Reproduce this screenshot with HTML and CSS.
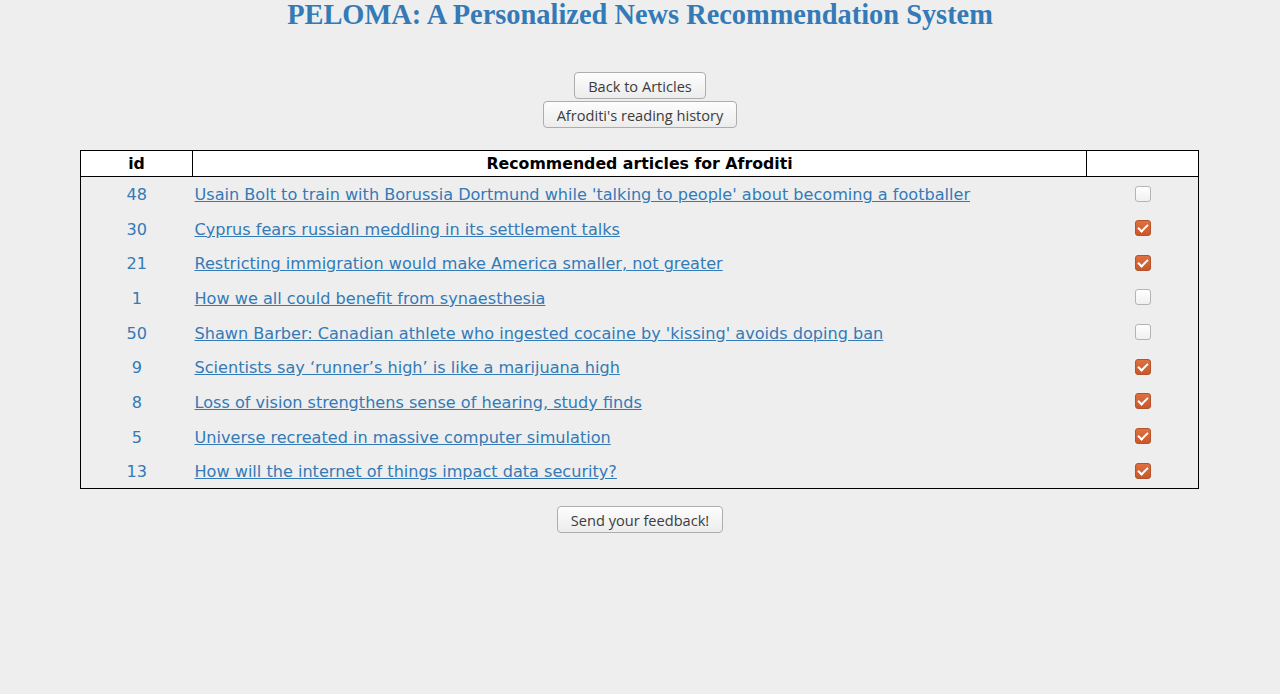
FILE: index.html
```html
<!DOCTYPE html>
<html>
<head>
<meta charset="utf-8">
<link rel="stylesheet" href="styles.css">
</head>
<body>
<h1 class="title">PELOMA: A Personalized News Recommendation System</h1>
<div class="actions">
  <button class="btn">Back to Articles</button>
  <button class="btn">Afroditi's reading history</button>
</div>
<table class="recs">
  <thead>
    <tr><th class="col-id">id</th><th class="col-title">Recommended articles for Afroditi</th><th class="col-check"></th></tr>
  </thead>
  <tbody>
    <tr><td class="id">48</td><td class="art"><a href="#">Usain Bolt to train with Borussia Dortmund while 'talking to people' about becoming a footballer</a></td><td class="chk"><span class="box"></span></td></tr>
    <tr><td class="id">30</td><td class="art"><a href="#">Cyprus fears russian meddling in its settlement talks</a></td><td class="chk"><span class="box on"></span></td></tr>
    <tr><td class="id">21</td><td class="art"><a href="#">Restricting immigration would make America smaller, not greater</a></td><td class="chk"><span class="box on"></span></td></tr>
    <tr><td class="id">1</td><td class="art"><a href="#">How we all could benefit from synaesthesia</a></td><td class="chk"><span class="box"></span></td></tr>
    <tr><td class="id">50</td><td class="art"><a href="#">Shawn Barber: Canadian athlete who ingested cocaine by 'kissing' avoids doping ban</a></td><td class="chk"><span class="box"></span></td></tr>
    <tr><td class="id">9</td><td class="art"><a href="#">Scientists say ‘runner’s high’ is like a marijuana high</a></td><td class="chk"><span class="box on"></span></td></tr>
    <tr><td class="id">8</td><td class="art"><a href="#">Loss of vision strengthens sense of hearing, study finds</a></td><td class="chk"><span class="box on"></span></td></tr>
    <tr><td class="id">5</td><td class="art"><a href="#">Universe recreated in massive computer simulation</a></td><td class="chk"><span class="box on"></span></td></tr>
    <tr><td class="id">13</td><td class="art"><a href="#">How will the internet of things impact data security?</a></td><td class="chk"><span class="box on"></span></td></tr>
  </tbody>
</table>
<div class="actions feedback">
  <button class="btn">Send your feedback!</button>
</div>
</body>
</html>
```
FILE: styles.css
```css
html, body {
  margin: 0;
  padding: 0;
  background: #eeeeee;
}
body {
  font-family: "DejaVu Sans", Verdana, sans-serif;
  color: #000;
}
.title {
  margin: 0;
  padding-top: 1px;
  text-align: center;
  font-family: "Liberation Serif", Georgia, serif;
  font-weight: bold;
  font-size: 28.4px;
  line-height: 28px;
  color: #337ab7;
}
.actions {
  display: flex;
  flex-direction: column;
  align-items: center;
  gap: 2px;
  margin-top: 43px;
}
.btn {
  font-family: "Open Sans", "DejaVu Sans", sans-serif;
  font-size: 14.6px;
  color: #3c3c3c;
  height: 27px;
  padding: 0 13px;
  border: 1px solid #adadad;
  border-radius: 4px;
  background: linear-gradient(#fdfdfd, #ececec);
}
.btn.wide { padding: 0 14px; }
.recs {
  margin: 22px 0 0 80px;
  width: 1119px;
  border-collapse: collapse;
  border: 1px solid #000;
}
.recs th {
  border: 1px solid #000;
  background: #fff;
  font-size: 15.75px;
  font-weight: bold;
  height: 25px;
  padding: 0;
  line-height: 18px;
}
.col-id { width: 111px; }
.col-check { width: 111px; }
.recs td {
  height: 34.7px;
  padding: 1px 0 0;
  box-sizing: border-box;
  font-size: 16.1px;
  line-height: 19px;
  color: #337ab7;
}
.recs td.id { text-align: center; }
.recs td.art { padding-left: 2px; text-align: left; }
.recs td.chk { text-align: center; padding-left: 2px; }
.recs a { color: #337ab7; text-decoration: underline; }
.box {
  display: inline-block;
  vertical-align: middle;
  width: 14px;
  height: 14px;
  border: 1px solid #b4b4b4;
  border-radius: 3px;
  background: linear-gradient(#ffffff, #f0f0f0);
  box-sizing: content-box;
  position: relative;
  top: -2px;
}
.box.on {
  border-color: #b5532a;
  background: linear-gradient(#e0703f, #c9572b);
}
.box.on::after {
  content: "";
  position: absolute;
  left: 4px;
  top: 1px;
  width: 4px;
  height: 8px;
  border: solid #fff;
  border-width: 0 2.5px 2.5px 0;
  transform: rotate(45deg);
}
.feedback {
  margin-top: 17px;
}
```
